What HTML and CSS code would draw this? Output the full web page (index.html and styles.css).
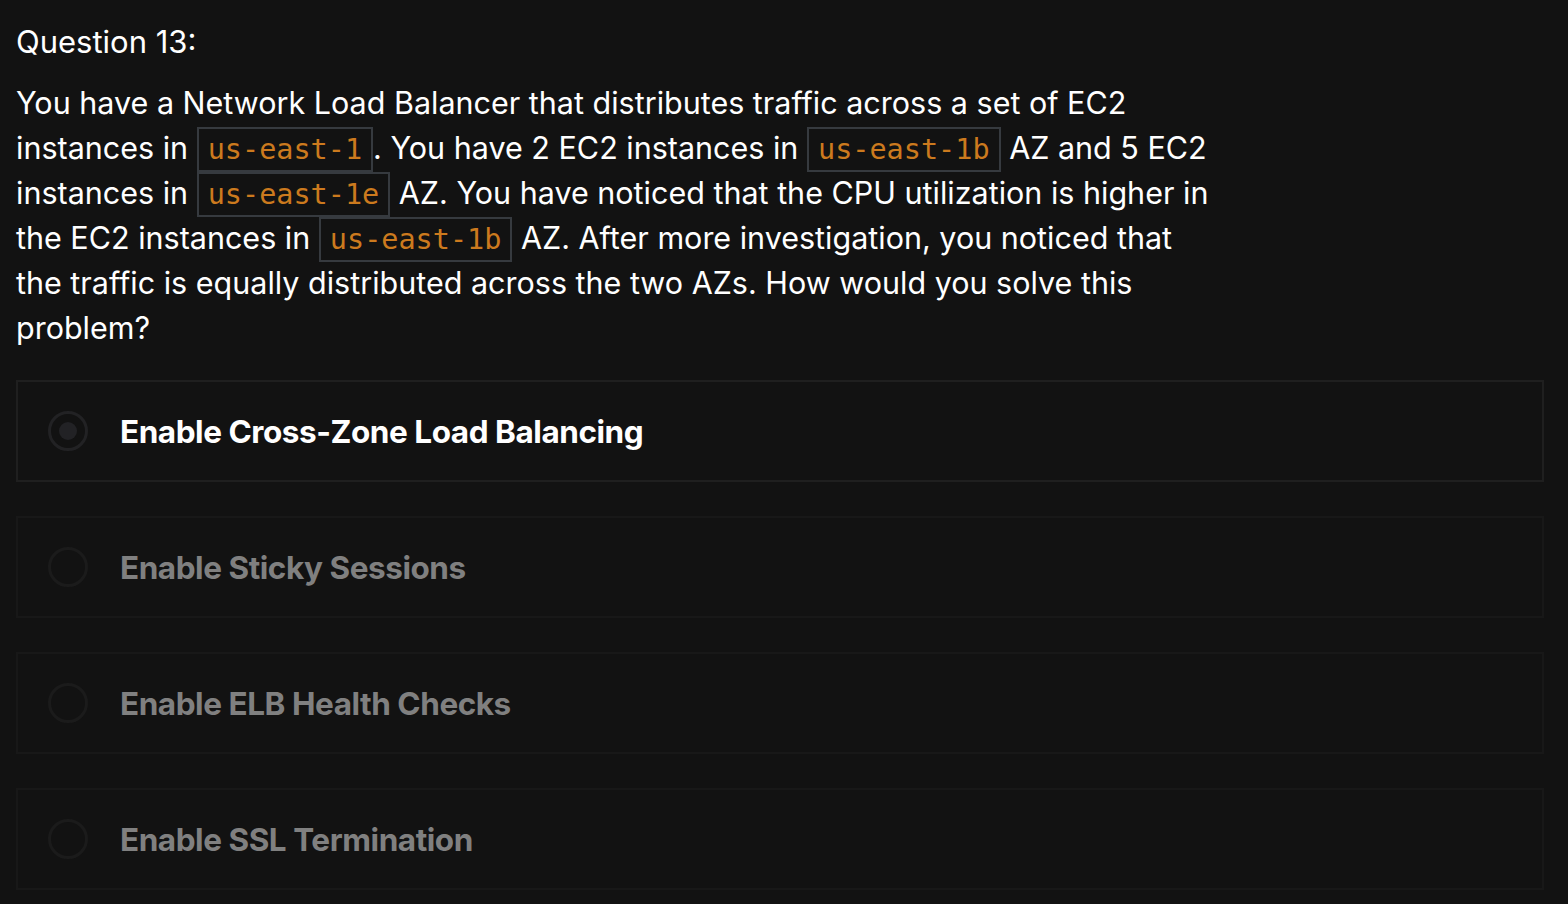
FILE: index.html
```html
<!DOCTYPE html>
<html>
<head>
<meta charset="utf-8">
<link rel="stylesheet" href="styles.css">
</head>
<body>
<main class="quiz">
  <h2 class="q-title">Question 13:</h2>
  <p class="q-text">You have a Network Load Balancer that distributes traffic across a set of EC2 instances in <code>us-east-1</code>. You have 2 EC2 instances in <code>us-east-1b</code> AZ and 5 EC2 instances in <code>us-east-1e</code> AZ. You have noticed that the CPU utilization is higher in the EC2 instances in <code>us-east-1b</code> AZ. After more investigation, you noticed that the traffic is equally distributed across the two AZs. How would you solve this problem?</p>
  <div class="options">
    <div class="option selected"><span class="radio"></span><span class="label">Enable Cross-Zone Load Balancing</span></div>
    <div class="option"><span class="radio"></span><span class="label">Enable Sticky Sessions</span></div>
    <div class="option"><span class="radio"></span><span class="label">Enable ELB Health Checks</span></div>
    <div class="option"><span class="radio"></span><span class="label">Enable SSL Termination</span></div>
  </div>
</main>
</body>
</html>
```
FILE: styles.css
```css
html, body {
  margin: 0;
  padding: 0;
  background: #121212;
}
body {
  font-family: Inter, "Noto Sans", sans-serif;
  color: #ffffff;
}
.quiz {
  padding: 20px 24px 0 16px;
}
.q-title {
  margin: 0;
  font-size: 31px;
  font-weight: 400;
  line-height: 44px;
}
.q-text {
  margin: 16px 0 0 0;
  max-width: 1200px;
  font-size: 30.5px;
  line-height: 45px;
  font-weight: 400;
}
.q-text code {
  font-family: "DejaVu Sans Mono", monospace;
  font-size: 28.5px;
  line-height: 1;
  color: #cc7a1e;
  border: 2px solid #363a3f;
  padding: 4px 9px;
}
.options {
  margin-top: 30px;
  display: flex;
  flex-direction: column;
  gap: 34px;
}
.option {
  height: 98px;
  border: 2px solid #181818;
  display: flex;
  align-items: center;
  padding-left: 30px;
}
.option.selected {
  border-color: #1f1f1f;
}
.radio {
  width: 34px;
  height: 34px;
  border: 3px solid #1b1b1b;
  border-radius: 50%;
  display: flex;
  align-items: center;
  justify-content: center;
  flex: none;
}
.selected .radio {
  border-color: #222224;
}
.selected .radio::after {
  content: "";
  width: 18px;
  height: 18px;
  border-radius: 50%;
  background: #222225;
}
.label {
  margin-left: 32px;
  font-size: 31.5px;
  font-weight: 700;
  color: #808080;
  letter-spacing: -0.45px;
}
.selected .label {
  color: #ffffff;
}
```
